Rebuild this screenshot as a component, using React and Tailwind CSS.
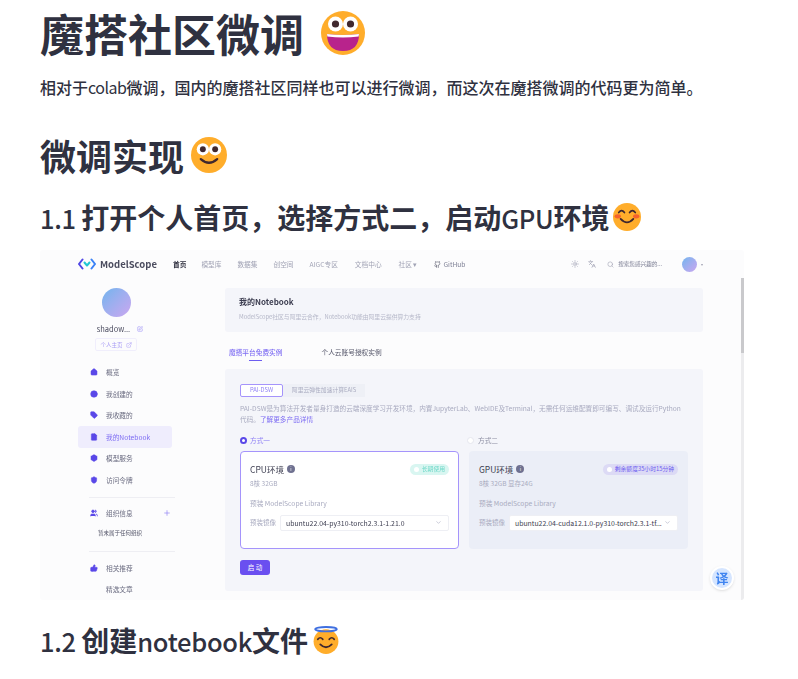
import React from "react";
import { Sun, Languages, Search, ChevronDown, Github, Plus, SquarePen, ExternalLink, Home, Disc, Tag, FileText, Box, ShieldCheck, Users, ThumbsUp } from "lucide-react";

const Face = ({ size, children }) => (
    <svg width={size} height={size} viewBox="0 0 44 44" className="inline-block shrink-0">
        <circle cx="22" cy="22" r="22" fill="#FFAD2B" />
        {children}
    </svg>
);

const Eyes = ({ y = 14, r = 6.5, p = 3.2 }) => (
    <>
        <circle cx="14.5" cy={y} r={r} fill="#fff" />
        <circle cx="29.5" cy={y} r={r} fill="#fff" />
        <circle cx="14.5" cy={y} r={p} fill="#40282e" />
        <circle cx="29.5" cy={y} r={p} fill="#40282e" />
    </>
);

const GrinFace = ({ size }) => (
    <Face size={size}>
        <Eyes y={13} r={7.5} p={3.6} />
        <path d="M6 23 Q22 25 38 23 Q38 40 22 40 Q6 40 6 23Z" fill="#B8238C" />
        <path d="M6 23 Q22 25 38 23 L37.6 25.6 Q22 27.5 6.4 25.6Z" fill="#fff" />
    </Face>
);

const SmileFace = ({ size }) => (
    <Face size={size}>
        <Eyes y={15} r={7.5} p={3.6} />
        <path d="M12 27 Q22 36 32 27" fill="none" stroke="#40282e" strokeWidth="2.8" strokeLinecap="round" />
    </Face>
);

const BlushFace = ({ size }) => (
    <Face size={size}>
        <ellipse cx="7.5" cy="21" rx="5" ry="3.2" fill="#F4622C" />
        <ellipse cx="36.5" cy="21" rx="5" ry="3.2" fill="#F4622C" />
        <path d="M9 15 Q13.5 9 18 15 M26 15 Q30.5 9 35 15" fill="none" stroke="#40282e" strokeWidth="2.6" strokeLinecap="round" />
        <path d="M12 25 Q22 36 32 25" fill="none" stroke="#40282e" strokeWidth="2.8" strokeLinecap="round" />
    </Face>
);

const HaloFace = ({ size }) => (
    <svg width={size} height={size} viewBox="0 0 44 44" className="inline-block shrink-0">
        <circle cx="22" cy="24.5" r="19.5" fill="#FFAD2B" />
        <ellipse cx="22" cy="5" rx="17" ry="3.4" fill="none" stroke="#3F6FE0" strokeWidth="3" />
        <path d="M9 21 Q13 16 17 21 M27 21 Q31 16 35 21" fill="none" stroke="#40282e" strokeWidth="2.6" strokeLinecap="round" />
        <path d="M13 29 Q22 38 31 29" fill="none" stroke="#40282e" strokeWidth="2.8" strokeLinecap="round" />
    </svg>
);

const ModelScopeLogo = () => (
    <svg width="18" height="12" viewBox="0 0 36 24" fill="none" strokeWidth="4" strokeLinecap="round" strokeLinejoin="round">
        <path d="M9 3 L2 12 L9 21" stroke="#4F46E5" />
        <path d="M27 3 L34 12 L27 21" stroke="#3B82F6" />
        <path d="M13 9 L18 15 L23 9" stroke="#22C6D3" />
    </svg>
);

const menuItems = [
    { icon: Home, label: "概览" },
    { icon: Disc, label: "我创建的" },
    { icon: Tag, label: "我收藏的" },
    { icon: FileText, label: "我的Notebook", active: true },
    { icon: Box, label: "模型服务" },
    { icon: ShieldCheck, label: "访问令牌" },
];

const SideRow = ({ icon: Icon, label, active }) => (
    <div className={`flex h-[21.6px] w-[94px] items-center rounded-[3px] pl-[12px] ${active ? "bg-[#efedfd] text-[#7d6cf3]" : "text-[#6a6b80]"}`}>
        <Icon size={8} className="text-[#5a48e8]" fill="#5a48e8" strokeWidth={1.5} />
        <span className="ml-[8px]">{label}</span>
    </div>
);

const EnvCard = ({ title, spec, badge, badgeClass, image, selected }) => (
    <div className={`flex h-[98px] w-[219px] flex-col rounded-[4px] ${selected ? "border border-[#a594fb] bg-white px-[9px]" : "bg-[#ebeef7] px-[10px]"}`}>
        <div className={`flex h-[16px] items-center ${selected ? "mt-[9px]" : "mt-[10px]"}`}>
            <span className="text-[8.5px] text-[#3c3d50]">{title}</span>
            <span className="ml-[3px] flex h-[8px] w-[8px] items-center justify-center rounded-full bg-[#6f7190] text-[5px] text-white">i</span>
            <span className={`ml-auto flex h-[11px] items-center rounded-full px-[4px] text-[5.8px] ${badgeClass}`}>
                <span className="mr-[3px] h-[5px] w-[5px] rounded-full bg-white" />
                {badge}
            </span>
        </div>
        <div className="mt-[2px] text-[6.5px] text-[#a9abc0]">{spec}</div>
        <div className="mt-[9px] text-[6.7px] text-[#a9abc0]">预装 ModelScope Library</div>
        <div className="mt-[7px] flex items-center text-[6.5px] text-[#a9abc0]">
            <span className="w-[30px]">预装镜像</span>
            <div className="flex h-[16px] flex-1 items-center justify-between rounded-[2px] border border-[#eeeff4] bg-white pl-[5px] pr-[6px] text-[6.9px] text-[#3c3d50]">
                <span className="whitespace-nowrap">{image}</span>
                <ChevronDown size={7} className="text-[#a9abc0]" />
            </div>
        </div>
    </div>
);

// the embedded screenshot, shown small and slightly soft like the source image
const Shot = () => (
    <div className="relative mt-[12px] flex h-[350px] w-[704px] flex-col overflow-hidden rounded-[3px] bg-[#fcfcfd] text-[6.7px]">
        <div className="flex h-[38px] shrink-0 items-start blur-[0.6px]">
            <div className="mt-[8px] flex h-[12px] flex-1 items-center pl-[38px] text-[#a0a2b4]">
                <ModelScopeLogo />
                <span className="ml-[4px] w-[50px] whitespace-nowrap text-[9.5px] font-bold text-[#4a4b5e]">ModelScope</span>
                <span className="ml-[23px] font-bold text-[#2c2d3d]">首页</span>
                <span className="ml-[15px]">模型库</span>
                <span className="ml-[16px]">数据集</span>
                <span className="ml-[16px]">创空间</span>
                <span className="ml-[16px]">AIGC专区</span>
                <span className="ml-[17px]">文档中心</span>
                <span className="ml-[17px]">社区 ▾</span>
                <Github size={7} className="ml-[17px] text-[#4a4b5e]" />
                <span className="ml-[2px] text-[#7f8196]">GitHub</span>
                <Sun size={8} className="ml-auto" />
                <Languages size={8} className="ml-[9px]" />
                <Search size={7} className="ml-[11px]" />
                <span className="ml-[4px] text-[5.6px] text-[#7f8196]">搜索您感兴趣的...</span>
                <span className="ml-[20px] h-[15px] w-[15px] rounded-full bg-gradient-to-br from-[#6fb4ee] to-[#c9a6f0]" />
                <span className="ml-[4px] mr-[41px] text-[4px]">▾</span>
            </div>
        </div>

        <div className="flex min-h-0 flex-1 blur-[0.6px]">
            <aside className="flex w-[185px] shrink-0 flex-col items-start pl-[38px]">
                <div className="flex w-[76px] flex-col items-center">
                    <span className="h-[29px] w-[29px] rounded-full bg-gradient-to-br from-[#6fb4ee] to-[#c9a6f0]" />
                    <div className="ml-[8px] mt-[6px] flex items-center text-[7.5px] text-[#4a4b5e]">
                        shadow...
                        <SquarePen size={6} className="ml-[7px] text-[#8f80f5]" />
                    </div>
                    <div className="mt-[4px] flex h-[13px] items-center rounded-[2px] border border-[#f0eefc] px-[4px] text-[5.5px] text-[#a99df5]">
                        个人主页
                        <ExternalLink size={6} className="ml-[3px]" />
                    </div>
                </div>
                <div className="mt-[10px] flex flex-col">
                    {menuItems.map((item) => (
                        <SideRow key={item.label} {...item} />
                    ))}
                </div>
                <div className="ml-[11px] mt-[6px] h-px w-[86px] bg-[#eeeef3]" />
                <div className="mt-[5px] flex h-[22px] w-[94px] items-center pl-[12px] text-[#6a6b80]">
                    <Users size={8} className="text-[#5a48e8]" fill="#5a48e8" />
                    <span className="ml-[8px]">组织信息</span>
                    <Plus size={8} className="ml-auto mr-[1px] text-[#8f80f5]" />
                </div>
                <div className="mt-[2px] flex h-[16px] items-center pl-[20px] text-[5.5px] text-[#55566a]">暂未属于任何组织</div>
                <div className="ml-[11px] mt-[10px] h-px w-[86px] bg-[#eeeef3]" />
                <div className="mt-[5px] flex flex-col">
                    <SideRow icon={ThumbsUp} label="相关推荐" />
                    <div className="flex h-[21.6px] items-center pl-[28px] text-[#6a6b80]">精选文章</div>
                </div>
            </aside>

            <main className="flex w-[478px] shrink-0 flex-col pb-[9px]">
                <div className="flex h-[44px] shrink-0 flex-col rounded-[3px] bg-[#f4f5fa] pl-[14px]">
                    <div className="mt-[8px] text-[8px] font-semibold text-[#3c3d50]">我的Notebook</div>
                    <div className="mt-[5px] whitespace-nowrap text-[5.8px] text-[#b5b7c8]">ModelScope社区与阿里云合作，Notebook功能由阿里云提供算力支持</div>
                </div>
                <div className="mt-[15px] flex h-[22px] shrink-0 items-start pl-[4px]">
                    <div className="flex flex-col items-center">
                        <span className="font-medium text-[#7d6cf3]">魔搭平台免费实例</span>
                        <span className="mt-[3px] h-[1px] w-[13px] bg-[#6d5df0]" />
                    </div>
                    <span className="ml-[39px] text-[#55566a]">个人云账号授权实例</span>
                </div>
                <div className="flex flex-1 flex-col rounded-[3px] bg-[#f4f5fa] pl-[15px] pt-[15px]">
                    <div className="flex h-[13px] items-center text-[5.8px]">
                        <span className="flex h-[13px] w-[43px] items-center justify-center rounded-[2px] border border-[#a594fb] bg-white text-[#8f80f5]">PAI-DSW</span>
                        <span className="flex h-[13px] w-[82px] items-center justify-center bg-[#eef0f6] text-[#a9abc0]">阿里云弹性加速计算EAIS</span>
                    </div>
                    <div className="mt-[6px] w-[450px] text-[6.65px] leading-[11px] text-[#a9abc0]">
                        <div className="whitespace-nowrap">PAI-DSW是为算法开发者量身打造的云端深度学习开发环境，内置JupyterLab、WebIDE及Terminal，无需任何运维配置即可编写、调试及运行Python</div>
                        代码。<span className="text-[#7d6cf3]">了解更多产品详情</span>
                    </div>
                    <div className="mt-[10px] flex">
                        <div className="flex w-[227px] items-center text-[#8f80f5]">
                            <span className="h-[7px] w-[7px] rounded-full border-2 border-[#5a48e8] bg-white" />
                            <span className="ml-[3px]">方式一</span>
                        </div>
                        <div className="flex items-center text-[#8d8fa3]">
                            <span className="h-[7px] w-[7px] rounded-full border border-[#e6e7ee] bg-white" />
                            <span className="ml-[4px]">方式二</span>
                        </div>
                    </div>
                    <div className="mt-[6px] flex gap-[10px]">
                        <EnvCard
                            selected
                            title="CPU环境"
                            spec="8核 32GB"
                            badge="长期使用"
                            badgeClass="bg-[#d9f6f1] text-[#6fd8c8]"
                            image="ubuntu22.04-py310-torch2.3.1-1.21.0"
                        />
                        <EnvCard
                            title="GPU环境"
                            spec="8核 32GB 显存24G"
                            badge="剩余额度35小时15分钟"
                            badgeClass="bg-[#dcdaf5] text-[#6d5df0]"
                            image="ubuntu22.04-cuda12.1.0-py310-torch2.3.1-tf..."
                        />
                    </div>
                    <div className="mt-[11px] flex h-[15px] w-[30px] items-center justify-center rounded-[3px] bg-[#6a4ff0] text-[6.5px] text-white">启 动</div>
                </div>
            </main>
        </div>

        {/* page scrollbar sits on top of the shot */}
        <div className="absolute bottom-0 right-0 top-[28px] flex w-[3px] flex-col blur-[0.3px]">
            <div className="h-[75px] bg-[#c9c9cc]" />
            <div className="flex-1 bg-[#ececee]" />
        </div>
        <div className="absolute right-[10px] top-[316px] flex h-[24px] w-[24px] items-center justify-center rounded-full border-2 border-white bg-[#d5e5ff] text-[13px] font-bold text-[#3f84f0] shadow-sm">译</div>
    </div>
);

// latin runs in the headings are lighter and narrower than the CJK around them
const Latin = ({ children }) => (
    <span className="text-[25.5px] font-medium tracking-[-0.3px]">{children}</span>
);

const App = () => {
    return (
        <div className="min-h-[679px] overflow-hidden bg-white pl-[40px] font-['Noto_Sans_CJK_SC','Noto_Sans',sans-serif] text-[#2f3140]">
            <h1 className="flex h-[66px] items-center text-[44px] font-bold leading-[66px]">
                魔搭社区微调
                <span className="ml-[17px] flex"><GrinFace size={44} /></span>
            </h1>
            <p className="mt-[9px] h-[24px] text-[16px] font-medium leading-[24px]">
                相对于<span className="font-normal tracking-[-0.5px]">colab</span>微调，国内的魔搭社区同样也可以进行微调，而这次在魔搭微调的代码更为简单。
            </p>
            <h2 className="mt-[29px] flex h-[54px] items-center text-[36px] font-bold leading-[54px]">
                微调实现
                <span className="ml-[7px] flex"><SmileFace size={36} /></span>
            </h2>
            <h3 className="mt-[14px] flex h-[42px] items-center text-[28px] font-bold leading-[42px]">
                <span className="whitespace-pre">
                    <Latin>1.1 </Latin>打开个人首页，选择方式二，启动<Latin>GPU</Latin>环境
                </span>
                <span className="ml-[4px] flex"><BlushFace size={28} /></span>
            </h3>
            <Shot />
            <h3 className="mt-[19px] flex h-[42px] items-center text-[28px] font-bold leading-[42px]">
                <span className="whitespace-pre">
                    <Latin>1.2 </Latin>创建<Latin>notebook</Latin>文件
                </span>
                <span className="ml-[4px] flex"><HaloFace size={28} /></span>
            </h3>
        </div>
    );
};

export default App;
